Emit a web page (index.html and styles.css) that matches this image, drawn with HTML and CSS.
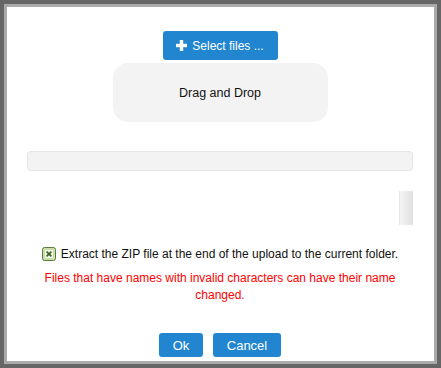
FILE: index.html
```html
<!DOCTYPE html>
<html lang="en">
<head>
  <meta charset="UTF-8" />
  <title>Upload</title>
  <link rel="stylesheet" href="styles.css">
</head>
<body>
  <div class="dialog">
    <div class="upload">
      <button class="btn btn-select">
        <svg class="plus" width="11" height="11" viewBox="0 0 11 11" aria-hidden="true">
          <rect x="3.8" y="0" width="3.4" height="11" fill="#fff"/>
          <rect x="0" y="3.8" width="11" height="3.4" fill="#fff"/>
        </svg>
        Select files ...
      </button>
      <div class="dropzone">Drag and Drop</div>
    </div>

    <div class="progress"></div>

    <div class="filelist">
      <div class="scroll-thumb"></div>
    </div>

    <label class="extract">
      <svg class="check" width="14" height="14" viewBox="0 0 14 14" aria-hidden="true">
        <rect x="0.5" y="0.5" width="13" height="13" rx="2" fill="#c9dfa9" stroke="#5c7c3e"/>
        <rect x="3" y="3" width="8" height="8" fill="#f2f7ea"/>
        <path d="M4.6 4.6 L9.4 9.4 M9.4 4.6 L4.6 9.4" stroke="#3f5f26" stroke-width="1.7"/>
      </svg>
      Extract the ZIP file at the end of the upload to the current folder.
    </label>

    <p class="warning">Files that have names with invalid characters can have their name changed.</p>

    <div class="actions">
      <button class="btn btn-ok">Ok</button>
      <button class="btn btn-cancel">Cancel</button>
    </div>
  </div>
</body>
</html>
```

FILE: styles.css
```css
* {
  box-sizing: border-box;
}

html, body {
  margin: 0;
  height: 100%;
}

body {
  background: #666;
  padding: 4px;
  font-family: "Liberation Sans", Arial, sans-serif;
  font-size: 12px;
  color: #111;
}

.dialog {
  width: 433px;
  height: 360px;
  background: #fff;
  border: 3px solid #aaa;
  padding: 24px 21px 0 20px;
  display: flex;
  flex-direction: column;
}

.upload {
  display: flex;
  flex-direction: column;
  align-items: center;
}

.btn {
  background: #2185d0;
  color: #fff;
  border: none;
  border-radius: 3px;
  font-family: "Liberation Sans", Arial, sans-serif;
  font-size: 13px;
  cursor: pointer;
  padding: 0;
}

.btn-select {
  width: 115px;
  height: 29px;
  font-size: 12px;
  display: flex;
  align-items: center;
  justify-content: center;
  gap: 5px;
}

.dropzone {
  margin-top: 3px;
  width: 215px;
  height: 59px;
  background: #f3f3f3;
  border-radius: 15px;
  font-size: 12.5px;
  display: flex;
  align-items: center;
  justify-content: center;
  color: #111;
}

.progress {
  margin-top: 29px;
  height: 20px;
  background: #f3f3f3;
  border: 1px solid #e6e6e6;
  border-radius: 4px;
}

.filelist {
  margin-top: 20px;
  height: 34px;
  display: flex;
  justify-content: flex-end;
}

.scroll-thumb {
  width: 14px;
  height: 34px;
  background: linear-gradient(90deg, #f4f4f4, #e0e0e0);
  border-left: 1px solid #e8e8e8;
}

.extract {
  margin-top: 22px;
  display: flex;
  align-items: center;
  justify-content: center;
  gap: 5px;
  color: #111;
}

.warning {
  margin: 9px 0 0;
  color: #f00;
  text-align: center;
  line-height: 17px;
}

.actions {
  margin-top: 29px;
  display: flex;
  justify-content: center;
  gap: 10px;
}

.btn-ok {
  width: 44px;
  height: 24px;
}

.btn-cancel {
  width: 68px;
  height: 24px;
}
```
